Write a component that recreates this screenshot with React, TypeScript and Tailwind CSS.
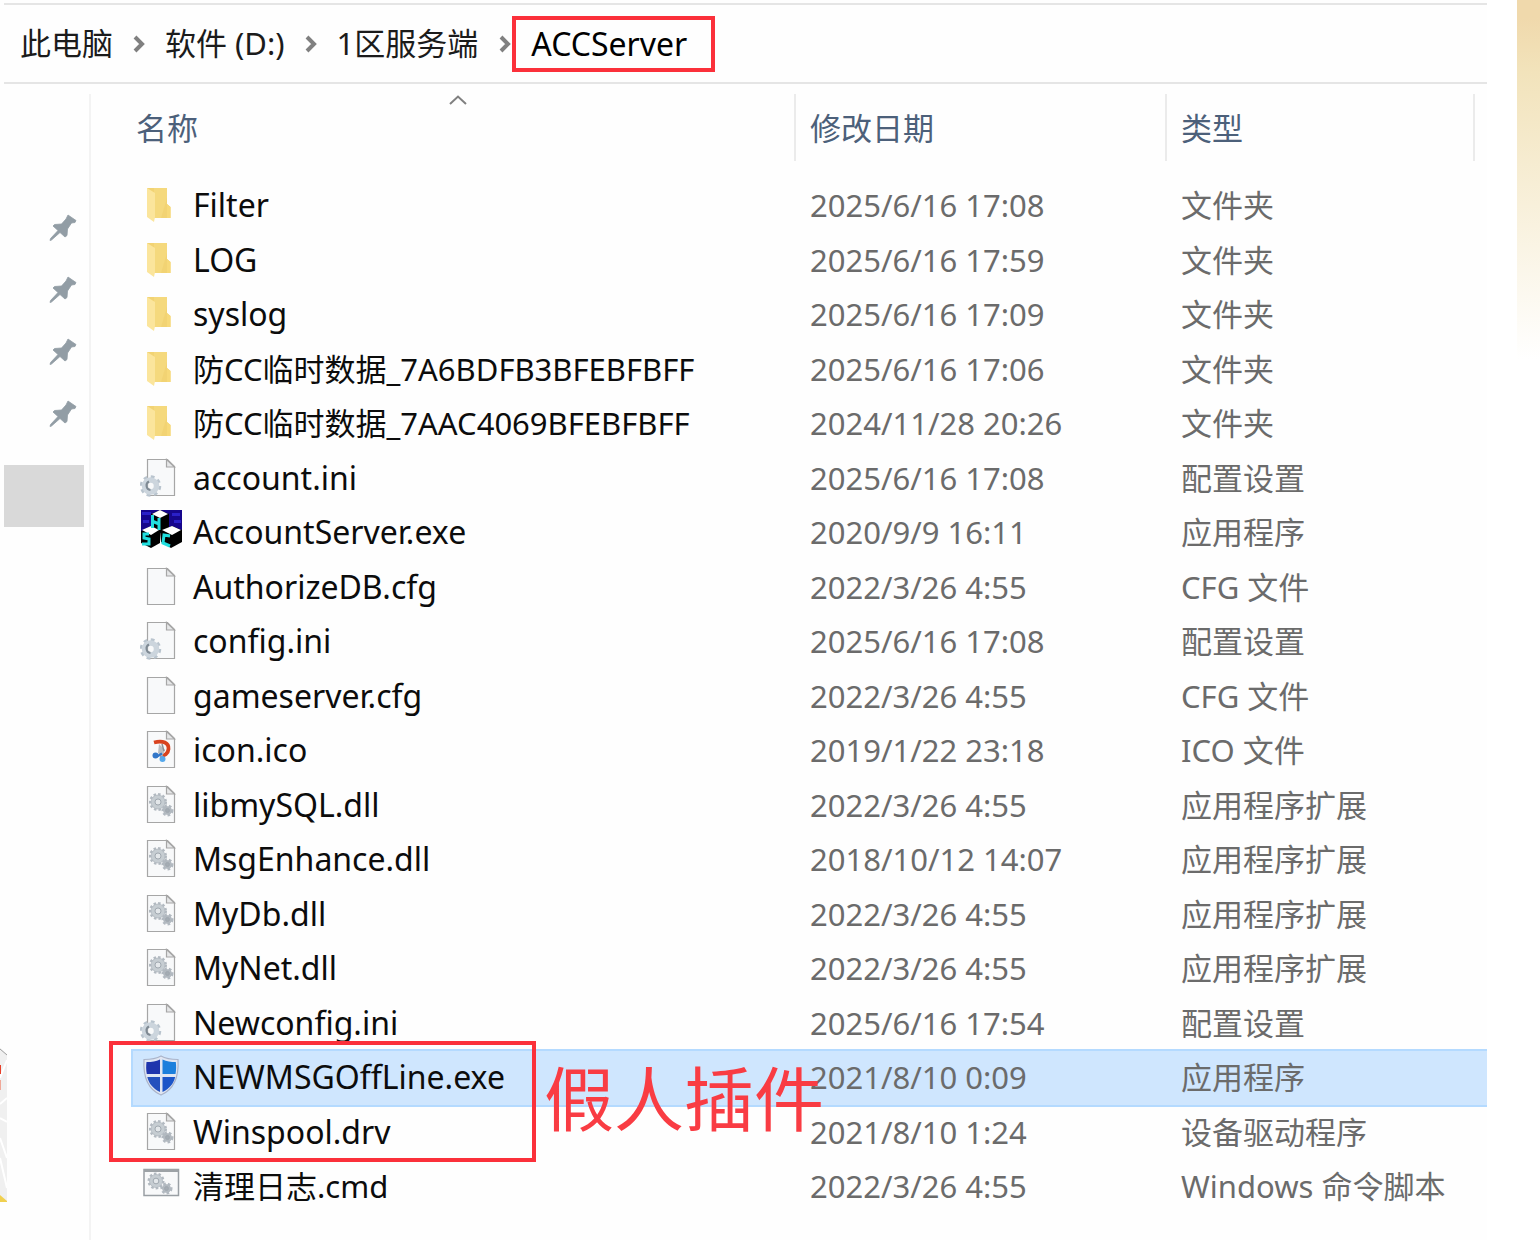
import React from 'react';

type IconKind = 'folder' | 'ini' | 'blocks' | 'file' | 'ico' | 'dll' | 'shield' | 'cmd';

interface FileEntry {
  name: string;
  date: string;
  type: string;
  icon: IconKind;
  selected?: boolean;
}

const FILES: FileEntry[] = [
  { name: 'Filter', date: '2025/6/16 17:08', type: '文件夹', icon: 'folder' },
  { name: 'LOG', date: '2025/6/16 17:59', type: '文件夹', icon: 'folder' },
  { name: 'syslog', date: '2025/6/16 17:09', type: '文件夹', icon: 'folder' },
  { name: '防CC临时数据_7A6BDFB3BFEBFBFF', date: '2025/6/16 17:06', type: '文件夹', icon: 'folder' },
  { name: '防CC临时数据_7AAC4069BFEBFBFF', date: '2024/11/28 20:26', type: '文件夹', icon: 'folder' },
  { name: 'account.ini', date: '2025/6/16 17:08', type: '配置设置', icon: 'ini' },
  { name: 'AccountServer.exe', date: '2020/9/9 16:11', type: '应用程序', icon: 'blocks' },
  { name: 'AuthorizeDB.cfg', date: '2022/3/26 4:55', type: 'CFG 文件', icon: 'file' },
  { name: 'config.ini', date: '2025/6/16 17:08', type: '配置设置', icon: 'ini' },
  { name: 'gameserver.cfg', date: '2022/3/26 4:55', type: 'CFG 文件', icon: 'file' },
  { name: 'icon.ico', date: '2019/1/22 23:18', type: 'ICO 文件', icon: 'ico' },
  { name: 'libmySQL.dll', date: '2022/3/26 4:55', type: '应用程序扩展', icon: 'dll' },
  { name: 'MsgEnhance.dll', date: '2018/10/12 14:07', type: '应用程序扩展', icon: 'dll' },
  { name: 'MyDb.dll', date: '2022/3/26 4:55', type: '应用程序扩展', icon: 'dll' },
  { name: 'MyNet.dll', date: '2022/3/26 4:55', type: '应用程序扩展', icon: 'dll' },
  { name: 'Newconfig.ini', date: '2025/6/16 17:54', type: '配置设置', icon: 'ini' },
  { name: 'NEWMSGOffLine.exe', date: '2021/8/10 0:09', type: '应用程序', icon: 'shield', selected: true },
  { name: 'Winspool.drv', date: '2021/8/10 1:24', type: '设备驱动程序', icon: 'dll' },
  { name: '清理日志.cmd', date: '2022/3/26 4:55', type: 'Windows 命令脚本', icon: 'cmd' },
];

const PARENTS = ['此电脑', '软件 (D:)', '1区服务端'];

// Latin-only names are set a touch larger than names with Chinese in them
const nameSize = (name: string) => (/[\u4e00-\u9fff]/.test(name) ? 'text-[31px]' : 'text-[32px]');

const Gear: React.FC<{ cx: number; cy: number; r: number; fill: string; hole: string }> = ({ cx, cy, r, fill, hole }) => (
  <g>
    <circle cx={cx} cy={cy} r={r - 1} fill="none" stroke="#b2b9c0" strokeWidth="3" strokeDasharray="2.4 2" />
    <circle cx={cx} cy={cy} r={r - 1.5} fill={fill} stroke="#b0b8bf" strokeWidth="0.8" />
    <circle cx={cx} cy={cy} r={r / 2.8} fill={hole} stroke="#a0a8b0" strokeWidth="1" />
  </g>
);

const Sheet = () => (
  <g>
    <path d="M7.5 4.5h20l7 7v29h-27z" fill="#f8f9fa" stroke="#a6a6a6" strokeWidth="1.2" />
    <path d="M26.5 4.5v7.5h8z" fill="#e6e7e8" stroke="#a6a6a6" strokeWidth="1.2" />
  </g>
);

const FileIcon: React.FC<{ kind: IconKind }> = ({ kind }) => (
  <svg viewBox="0 0 42 46" className="h-[46px] w-[42px] shrink-0" aria-hidden="true">
    {kind === 'folder' && (
      <g>
        <path d="M7 6h20v16l3.5 3v11H14z" fill="#f2d373" />
        <path d="M14 6h13v10l-6 20h-7z" fill="#f5d97d" />
        <path d="M27 22l3.5 3v11h-3.5z" fill="#f7d979" />
        <path d="M7 6l8 5v24l-1 5-7-5z" fill="#fbe59c" />
      </g>
    )}
    {(kind === 'file' || kind === 'ini' || kind === 'dll' || kind === 'ico') && <Sheet />}
    {kind === 'ini' && (
      <g>
        <circle cx="10.5" cy="31" r="9" fill="none" stroke="#b9c4ce" strokeWidth="3.5" strokeDasharray="3.6 3.47" />
        <circle cx="10.5" cy="31" r="6" fill="none" stroke="#ccd5dd" strokeWidth="5.5" />
        <path d="M9 26.5a4.5 4.5 0 0 0 1.5 8.5" fill="none" stroke="#7f8a94" strokeWidth="2" />
      </g>
    )}
    {kind === 'dll' && (
      <g>
        <Gear cx={18} cy={20} r={8.5} fill="#c6cdd2" hole="#e3e7ea" />
        <Gear cx={27.5} cy={28.5} r={5.5} fill="#b3bac0" hole="#a5adb4" />
      </g>
    )}
    {kind === 'ico' && (
      <g>
        <path d="M14 15.5c9-2.5 15 .5 14.5 6.5-.5 5-4 7-8 6.5" fill="none" stroke="#d9431f" strokeWidth="3.8" />
        <path d="M19 17l6 6-3 7-4-4z" fill="#b9bcc0" />
        <path d="M22 17l2 7" stroke="#8d9095" strokeWidth="1.5" />
        <circle cx="15.5" cy="28.5" r="3" fill="#3277c9" />
        <circle cx="22.5" cy="32" r="3" fill="#55a8ec" />
        <path d="M17 29.5l5-3" stroke="#3277c9" strokeWidth="2.5" />
      </g>
    )}
    {kind === 'blocks' && (
      <g>
        <path d="M1 1h41v23H1z" fill="#16068c" />
        <path d="M2 3h9v3H2zM32 4h8v3h-8zM34 11h7v3h-7zM3 11h6v3H3z" fill="#2a20c8" />
        <path d="M11 5l9-4 9 4v15l-8 3-10-3z" fill="#000" />
        <path d="M12 5l8-4 8 4-8 4z" fill="#fff" />
        <path d="M1 22l10-5 9 5v12l-9 5-10-5z" fill="#000" />
        <path d="M2 21l9-4 8 4-8 5z" fill="#fff" />
        <path d="M20 22l12-5 10 4v12l-11 6-10-6z" fill="#000" />
        <path d="M22 21l10-4 9 4-9 5z" fill="#fff" />
        <path d="M12.5 6v13M19 9v12M12 12l7 3" fill="none" stroke="#20dede" strokeWidth="3" />
        <path d="M9 25H4v4l5 1v5H2" fill="none" stroke="#20dede" strokeWidth="3" />
        <path d="M30 27l-6-1-1 8 7 3" fill="none" stroke="#20dede" strokeWidth="3" />
      </g>
    )}
    {kind === 'shield' && (
      <g>
        <path d="M21 2c5 3 11 3.5 17 3.5C39 22 35 35 21 41 7 35 3 22 4 5.500 10 5.500 16 5 21 2z" fill="#e0e6f2" stroke="#aab4ca" strokeWidth="1.2" />
        <path d="M20 5.5V20H6.8C6 16 6 12 6.500 8 12 8 16 7.500 20 5.500z" fill="#1f35ad" />
        <path d="M22.5 5.5V20h13c.8-4 .8-8 .3-12-5 0-9-.5-13.300-2.500z" fill="#1c7fdc" />
        <path d="M20 23v15C13 34.500 9 30 7.300 23z" fill="#2450bd" />
        <path d="M22.5 23v15c7-3.500 11-8 12.700-15z" fill="#1c55c8" />
      </g>
    )}
    {kind === 'cmd' && (
      <g>
        <path d="M4 6.5h34.5v26H4z" fill="#f8f9fa" stroke="#999fa4" strokeWidth="1.5" />
        <path d="M4 6h34.5v3H4z" fill="#9da2a6" />
        <Gear cx={16} cy={18} r={8} fill="#c6cdd2" hole="#e3e7ea" />
        <Gear cx={26.5} cy={25.5} r={5.5} fill="#b3bac0" hole="#a5adb4" />
      </g>
    )}
  </svg>
);

const Pin = () => (
  <svg viewBox="0 0 28 28" className="h-7 w-7" aria-hidden="true">
    <path
      d="M19 1l8 5.500-1 2-3.500.5-4 6-.5 6.500-2 1.500-5-4.500-8.500 7.500-1.500.5.500-2L9 16.500 4 12l1.500-1.500 7-.5L17 5z"
      fill="#929da5"
      stroke="#929da5"
      strokeWidth="0.8"
      strokeLinejoin="round"
    />
  </svg>
);

const Sidebar = () => (
  <aside className="w-[91px] shrink-0 border-r-2 border-[#f3f3f3] pl-1 pt-[103px]">
    <ul>
      {[0, 1, 2, 3].map((i) => (
        <li key={i} className="flex h-[62px] items-center justify-end pr-3">
          <Pin />
        </li>
      ))}
    </ul>
    <div className="mr-[5px] mt-5 h-[62px] bg-[#d9d9d9]" />
  </aside>
);

const Breadcrumb = () => (
  <nav className="ml-1 mt-[3px] flex h-[81px] items-center border-y-2 border-[#e5e5e5] pl-4 text-[#1b1b1b]">
    {PARENTS.map((label, i) => (
      <React.Fragment key={label}>
        <a href="#" className="whitespace-pre pb-0.5">{label}</a>
        <svg
          viewBox="0 0 12 18"
          className={i === PARENTS.length - 1 ? 'ml-[21px] h-[18px] w-3' : 'mx-5 h-[18px] w-3'}
          aria-hidden="true"
        >
          <path d="M2 2l7 7-7 7" fill="none" stroke="#808080" strokeWidth="4" />
        </svg>
      </React.Fragment>
    ))}
    <a
      href="#"
      className="ml-px flex h-14 w-[203px] items-center border-4 border-[#fb303a] pl-[15px] text-[32px] text-black"
    >
      ACCServer
    </a>
  </nav>
);

const FileTable = () => (
  <table className="w-full table-fixed border-collapse text-left">
    <colgroup>
      <col />
      <col className="w-[371px]" />
      <col className="w-[322px]" />
    </colgroup>
    <thead className="text-[#4c607a]">
      <tr>
        <th className="p-0 pb-[18px] font-normal">
          <div className="relative flex h-[67px] items-center pl-[5px]">
            名称
            <svg viewBox="0 0 18 10" className="absolute left-1/2 top-px -ml-3.5 h-2.5 w-[18px]" aria-hidden="true">
              <path d="M1 9l8-7.5L17 9" fill="none" stroke="#808080" strokeWidth="2" />
            </svg>
          </div>
        </th>
        <th className="p-0 pb-[18px] font-normal">
          <div className="flex h-[67px] items-center border-l-2 border-[#ebebeb] pl-3.5">修改日期</div>
        </th>
        <th className="p-0 pb-[18px] font-normal">
          <div className="mr-3 flex h-[67px] items-center border-x-2 border-[#ebebeb] pl-3.5">类型</div>
        </th>
      </tr>
    </thead>
    <tbody className="text-[#6b6b6b]">
      {FILES.map((file) => (
        <tr
          key={file.name}
          className={
            file.selected
              ? 'h-[54px] bg-[#cfe6fe] shadow-[0_-2px_0_#b4daff,0_2px_0_#b4daff,inset_2px_0_0_#b4daff]'
              : 'odd:h-[54px] even:h-[55px]'
          }
        >
          <td className="p-0 pb-0.5">
            <div className="flex items-center gap-[11px] pl-[9px] text-[#0c0c0c]">
              <FileIcon kind={file.icon} />
              <span className={`whitespace-nowrap ${nameSize(file.name)}`}>{file.name}</span>
            </div>
          </td>
          <td className="whitespace-nowrap p-0 pb-0.5 pl-4">{file.date}</td>
          <td className="whitespace-nowrap p-0 pb-0.5 pl-4">{file.type}</td>
        </tr>
      ))}
    </tbody>
  </table>
);

const App = () => (
  <div className="relative flex min-h-screen overflow-hidden bg-white font-['Noto_Sans','Noto_Sans_CJK_SC',sans-serif] text-[31px] leading-[46px]">
    <div className="flex min-w-0 flex-1 flex-col bg-[#fefefe]">
      <Breadcrumb />
      <div className="flex flex-1 pt-2.5">
        <Sidebar />
        <main className="relative min-w-0 flex-1 pl-10">
          <FileTable />
          {/* Callout round the two plugin files */}
          <div className="absolute left-[18px] top-[947px] h-[121px] w-[427px] border-4 border-[#fb303a]" />
          <div className="absolute left-[453px] top-[955px] whitespace-nowrap text-[70px] leading-[100px] text-[#f93c43]">
            假人插件
          </div>
        </main>
      </div>
    </div>

    <div className="ml-[30px] w-[23px] shrink-0">
      <div className="h-[360px] bg-linear-to-b from-[#f0d9ac] from-5% via-[#f2e3bb] via-20% to-white" />
    </div>

    {/* Sliver of artwork at the window edge */}
    <svg viewBox="0 0 7 154" className="absolute left-0 top-[1048px] h-[154px] w-[7px]" aria-hidden="true">
      <path d="M0 0l7 6v148H0z" fill="#f0f0f0" />
      <path d="M0 1l7 6" stroke="#a0a0a0" strokeWidth="1" />
      <path d="M0 30l7-18M0 56l7-6M0 70l7 4M0 90l7 20M0 110l7 30" stroke="#fff" strokeWidth="2" />
      <path d="M0 17h1v9H0z" fill="#e8402a" />
      <path d="M0 32h1v10H0z" fill="#f0a898" />
      <path d="M0 147l7 6v1H0z" fill="#f0d050" />
    </svg>
  </div>
);

export default App;
